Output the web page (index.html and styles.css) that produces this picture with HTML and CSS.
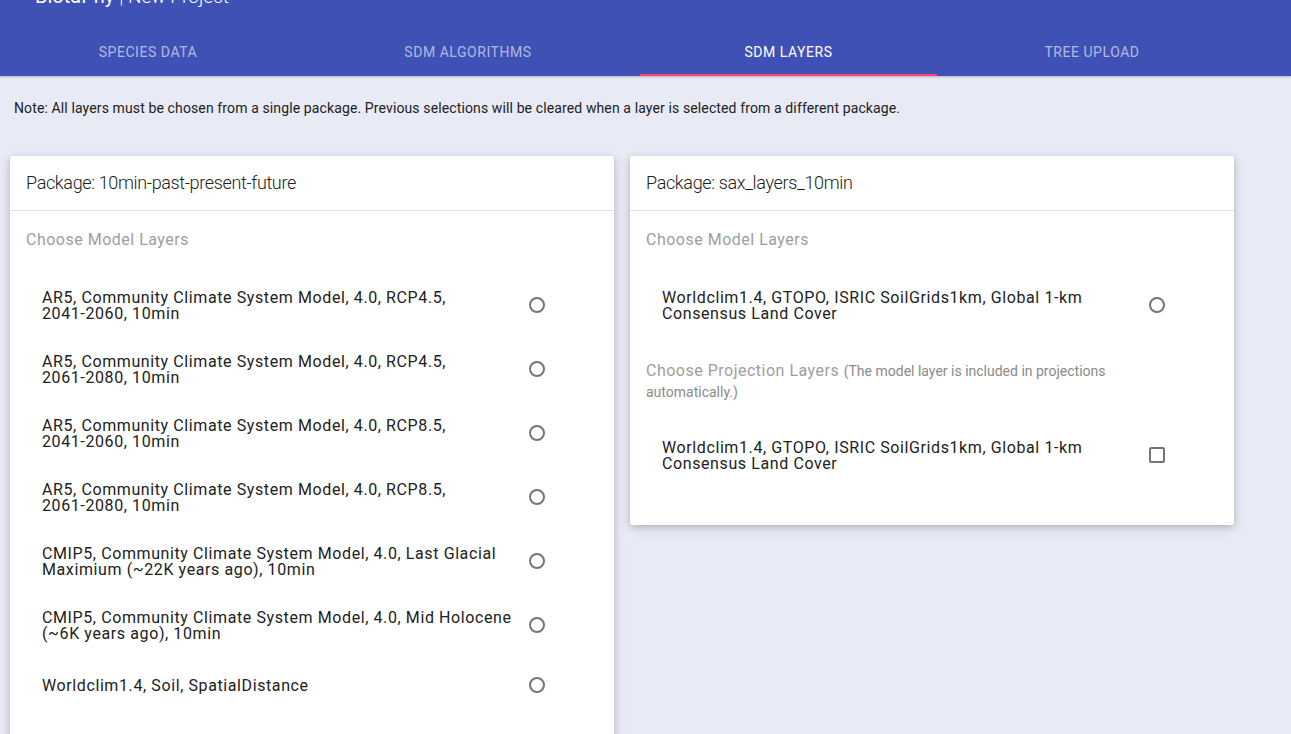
FILE: index.html
```html
<!DOCTYPE html>
<html lang="en">
<head>
<meta charset="utf-8">
<title>BiotaPhy | New Project</title>
<link rel="stylesheet" href="styles.css">
</head>
<body>
<header class="appbar">
  <div class="toolbar"><span class="title"><span class="brand">BiotaPhy</span> <span class="sub">| New Project</span></span></div>
  <nav class="tabs">
    <div class="tab">Species Data</div>
    <div class="tab">SDM Algorithms</div>
    <div class="tab active">SDM Layers</div>
    <div class="tab">Tree Upload</div>
  </nav>
</header>
<main class="content">
  <p class="note">Note: All layers must be chosen from a single package. Previous selections will be cleared when a layer is selected from a different package.</p>
  <div class="cards">
    <section class="card">
      <h2 class="card-title">Package: 10min-past-present-future</h2>
      <div class="card-body">
        <h3 class="subheader">Choose Model Layers</h3>
        <ul class="list">
          <li class="item"><span class="item-text">AR5, Community Climate System Model, 4.0, RCP4.5, <span class="nw">2041-2060,</span> 10min</span><span class="action"><span class="radio"></span></span></li>
          <li class="item"><span class="item-text">AR5, Community Climate System Model, 4.0, RCP4.5, <span class="nw">2061-2080,</span> 10min</span><span class="action"><span class="radio"></span></span></li>
          <li class="item"><span class="item-text">AR5, Community Climate System Model, 4.0, RCP8.5, <span class="nw">2041-2060,</span> 10min</span><span class="action"><span class="radio"></span></span></li>
          <li class="item"><span class="item-text">AR5, Community Climate System Model, 4.0, RCP8.5, <span class="nw">2061-2080,</span> 10min</span><span class="action"><span class="radio"></span></span></li>
          <li class="item"><span class="item-text">CMIP5, Community Climate System Model, 4.0, Last Glacial Maximium (~22K years ago), 10min</span><span class="action"><span class="radio"></span></span></li>
          <li class="item"><span class="item-text">CMIP5, Community Climate System Model, 4.0, Mid Holocene (~6K years ago), 10min</span><span class="action"><span class="radio"></span></span></li>
          <li class="item"><span class="item-text">Worldclim1.4, Soil, SpatialDistance</span><span class="action"><span class="radio"></span></span></li>
        </ul>
      </div>
    </section>
    <section class="card">
      <h2 class="card-title">Package: sax_layers_10min</h2>
      <div class="card-body">
        <h3 class="subheader">Choose Model Layers</h3>
        <ul class="list">
          <li class="item"><span class="item-text">Worldclim1.4, GTOPO, ISRIC SoilGrids1km, Global 1-km Consensus Land Cover</span><span class="action"><span class="radio"></span></span></li>
        </ul>
        <h3 class="subheader proj">Choose Projection Layers <span class="hint">(The model layer is included in projections automatically.)</span></h3>
        <ul class="list list-proj">
          <li class="item"><span class="item-text">Worldclim1.4, GTOPO, ISRIC SoilGrids1km, Global 1-km Consensus Land Cover</span><span class="action"><span class="checkbox"></span></span></li>
        </ul>
      </div>
    </section>
  </div>
</main>
</body>
</html>
```

FILE: styles.css
```css
* { box-sizing: border-box; }
html, body { margin: 0; padding: 0; }
body {
  background: #e8eaf6;
  font-family: Roboto, "Liberation Sans", Arial, sans-serif;
  color: #212121;
  overflow: hidden;
  height: 734px;
}
.appbar {
  background: #3f51b5;
  margin-top: -36px;
  box-shadow: 0 1px 2px rgba(0,0,0,0.25);
  position: relative;
  z-index: 1;
}
.toolbar {
  height: 64px;
  display: flex;
  align-items: center;
  padding-left: 35px;
  color: #fff;
}
.title { font-size: 20px; line-height: 24px; }
.brand { font-weight: 400; }
.sub { font-weight: 300; font-size: 19px; }
.tabs {
  display: grid;
  grid-template-columns: 296px 344px 297px 310px;
  height: 48px;
}
.tab {
  text-transform: uppercase;
  font-size: 14px;
  letter-spacing: 0.55px;
  color: rgba(255,255,255,0.6);
  display: flex;
  align-items: center;
  justify-content: center;
  border-bottom: 2px solid transparent;
  padding-top: 2px;
}
.tab.active { color: #fff; border-bottom-color: #ff4081; }
.content { padding: 0; }
.note {
  margin: 22px 0 0 14px;
  font-size: 14px;
  line-height: 20px;
  letter-spacing: 0.12px;
  color: #212121;
}
.cards {
  display: grid;
  grid-template-columns: 604px 604px;
  column-gap: 16px;
  align-items: start;
  padding-left: 10px;
  margin-top: 38px;
}
.card {
  background: #fff;
  border-radius: 2px;
  box-shadow: 0 2px 6px rgba(0,0,0,0.16), 0 4px 14px rgba(0,0,0,0.10);
}
.card-title {
  margin: 0;
  font-size: 18px;
  font-weight: 300;
  letter-spacing: -0.35px;
  line-height: 22px;
  padding: 16px 16px;
  border-bottom: 1px solid #e0e0e0;
  color: #212121;
}
.card-body { padding: 0 16px 38px; }
.subheader {
  margin: 0;
  padding-top: 17px;
  font-size: 16px;
  font-weight: 400;
  line-height: 24px;
  color: #9e9e9e;
  letter-spacing: 0.5px;
}
.subheader.proj { padding-top: 24px; line-height: 20.5px; padding-right: 60px; }
.hint { font-size: 14px; line-height: 14px; letter-spacing: 0; color: #8a8a8a; }
.list { list-style: none; margin: 21px 0 0; padding: 0; }
.list-proj { margin-top: 21px; }
.item {
  display: flex;
  align-items: center;
  min-height: 56px;
  padding: 17px 39px 15px 16px;
}
.item-text {
  flex: 1;
  font-size: 16px;
  line-height: 16px;
  letter-spacing: 0.6px;
  color: #212121;
}
.nw { white-space: nowrap; }
.action {
  width: 44px;
  margin-top: -2px;
  display: flex;
  align-items: center;
  justify-content: center;
  flex: none;
}
.radio {
  width: 16px;
  height: 16px;
  border: 2px solid #757575;
  border-radius: 50%;
}
.checkbox {
  width: 16px;
  height: 16px;
  border: 2px solid #757575;
  border-radius: 2px;
}
```
